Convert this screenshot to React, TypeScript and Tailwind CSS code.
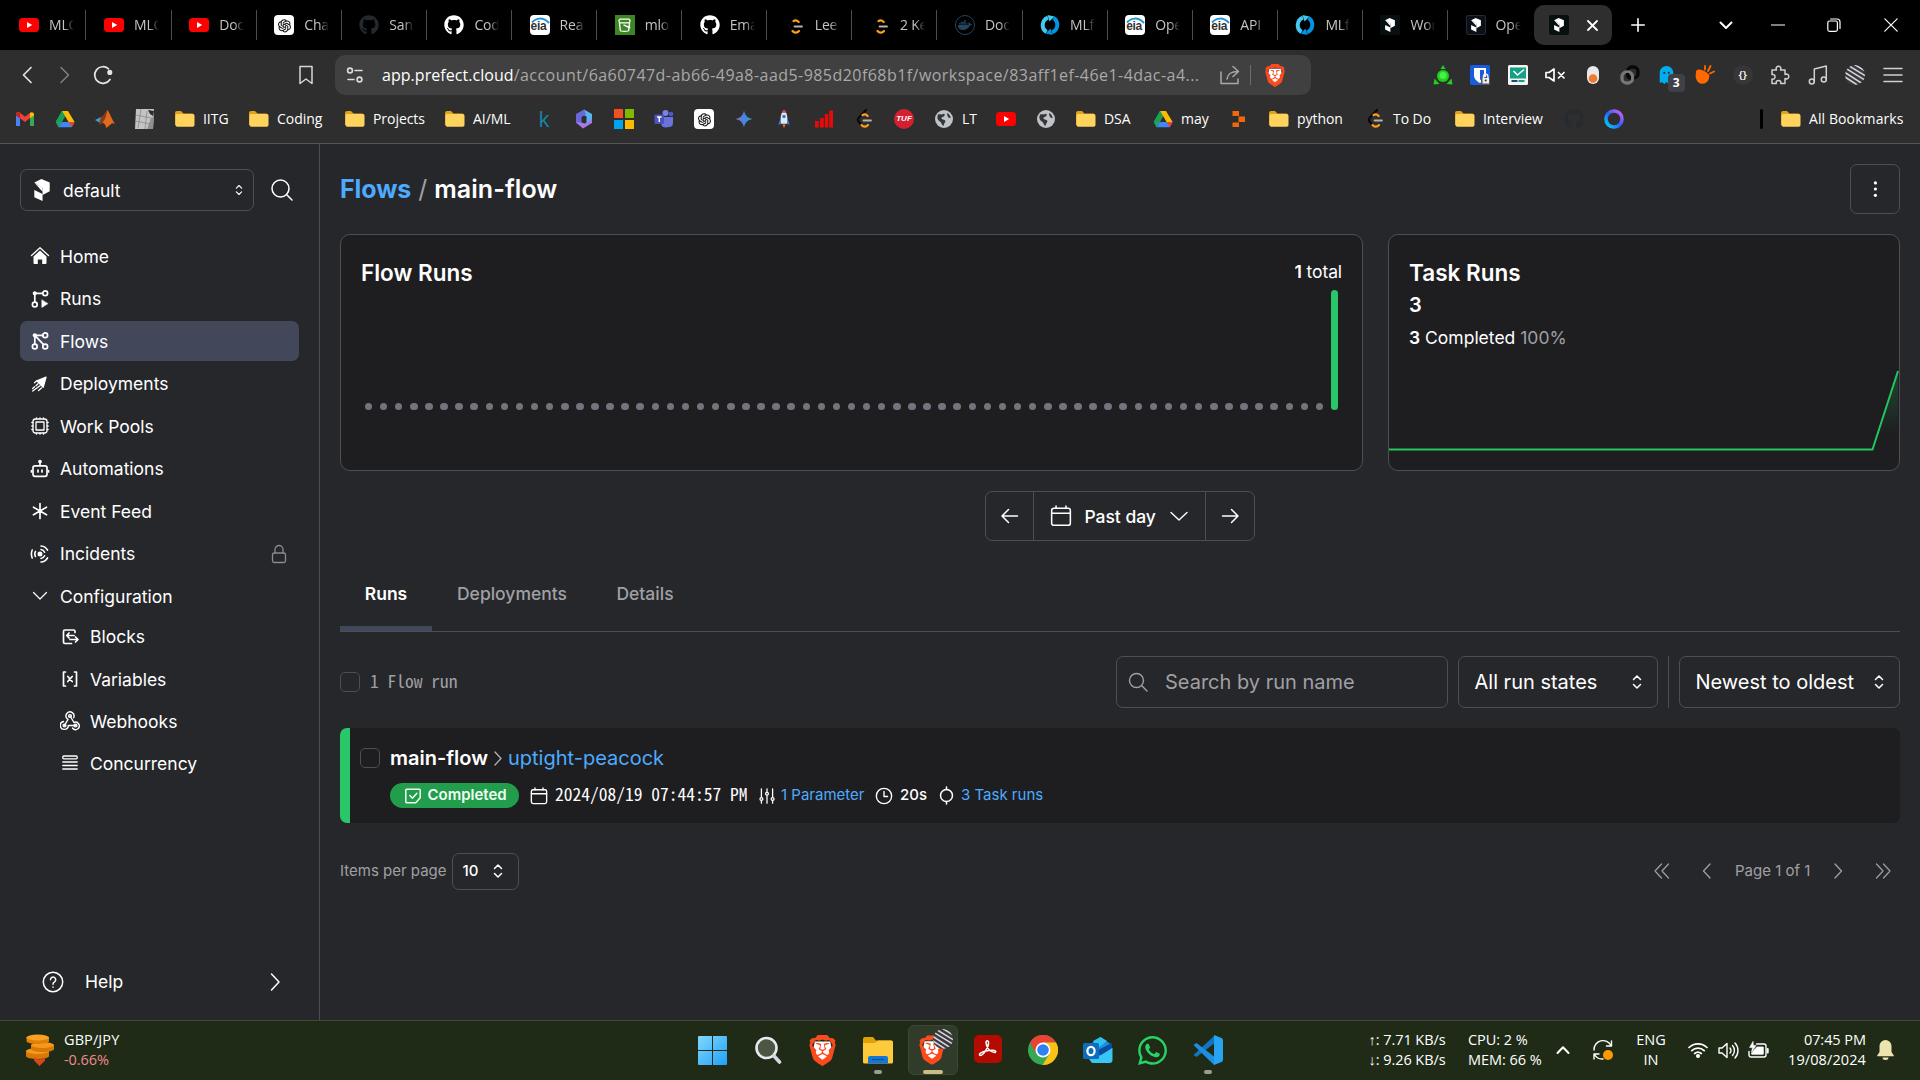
import React from "react";
import type { ReactNode } from "react";
import { FaGithub, FaDocker } from "react-icons/fa";
import { SiBrave } from "react-icons/si";
import { AiOutlineOpenAI } from "react-icons/ai";
import { FaWhatsapp, FaGhost } from "react-icons/fa6";

type SvgProps = { s?: number; w?: number; h?: number; vb?: string; sw?: number; className?: string; children: ReactNode };

function Line({ s = 20, w, h, vb = "0 0 20 20", sw = 1.4, className = "", children }: SvgProps) {
  return (
    <svg
      width={w ?? s}
      height={h ?? s}
      viewBox={vb}
      fill="none"
      stroke="currentColor"
      strokeWidth={sw}
      strokeLinecap="round"
      strokeLinejoin="round"
      className={`shrink-0 ${className}`}
    >
      {children}
    </svg>
  );
}

function Art({ s = 20, w, h, vb = "0 0 20 20", className = "", children }: SvgProps) {
  return (
    <svg width={w ?? s} height={h ?? s} viewBox={vb} className={`shrink-0 ${className}`}>
      {children}
    </svg>
  );
}

/* ---------- brand icons ---------- */

const Youtube = () => (
  <Art>
    <rect x="0" y="3" width="20" height="14" rx="3.5" fill="#f00" />
    <path d="M8 7l5.200 3L8 13z" fill="#fff" />
  </Art>
);
const OpenAI = () => (
  <div className="flex size-5 items-center justify-center rounded-[4px] bg-white">
    <AiOutlineOpenAI size={17} color="#111" />
  </div>
);
const Eia = () => (
  <div className="relative size-5 overflow-hidden rounded-[4px] bg-white">
    <span className="absolute top-[5px] left-[1px] font-['Liberation_Sans'] text-[12px] leading-[13px] font-bold tracking-[-0.3px] text-[#333]">eia</span>
    <Art className="absolute top-0 left-0">
      <path d="M2 7.500C6 3 13 1.500 19 8" fill="none" stroke="#1b95d4" strokeWidth="2" />
    </Art>
  </div>
);
const Bucket = () => (
  <Art>
    <rect width="20" height="20" fill="#3c8623" />
    <rect x="4" y="4.200" width="11" height="3.600" rx="1.500" fill="none" stroke="#fff" strokeWidth="1.300" />
    <path d="M4.500 8l.8 7.500c.2 1.200 8.200 1.200 8.400 0L14.500 8M8.500 9.800l4.500 2" fill="none" stroke="#fff" strokeWidth="1.300" />
    <circle cx="14" cy="12.200" r="1.200" fill="#fff" />
  </Art>
);
const Mlflow = () => (
  <Art>
    <path d="M6.500 17A8 8 0 0 1 8 2.700" fill="none" stroke="#43c9ed" strokeWidth="4" />
    <path d="M13.500 3A8 8 0 0 1 12 17.300" fill="none" stroke="#0194e2" strokeWidth="4" />
    <path d="M7.500 0l7 1.500-5 5z" fill="#43c9ed" />
    <path d="M12.500 20l-7-1.500 5-5z" fill="#0194e2" />
  </Art>
);
const prefectShape = (
  <>
    <path d="M3 4.200L9.500 1 17 4.200v8L10.500 15.500V9.200z" />
    <path d="M3 11l7.500 3.600V21L3 17.500z" />
    <path d="M3 4.200L10.500 9v3.500" />
  </>
);
const PrefectTab = ({ edge = false }: { edge?: boolean }) => (
  <div className={`flex size-5 items-center justify-center rounded-[2px] ${edge ? "border border-[#242833] bg-[#0b0f17]" : "bg-[#070f10]"}`}>
    <Art w={10} h={14} vb="3 1 14 20">
      <g fill="#fff">{prefectShape}</g>
    </Art>
  </div>
);
const Drive = () => (
  <Art>
    <path d="M7 2h6L6.500 13.500 3.500 18.500.7 13z" fill="#1ea362" />
    <path d="M7 2h6l6.600 11h-6z" fill="#fbbc04" />
    <path d="M7 2l3 5.200L6.800 13H.7z" fill="#1e9e50" />
    <path d="M3.600 18.300L6.600 13h13l-3 5.300z" fill="#4285f4" />
    <path d="M13.600 13h6l-2.900 5.200z" fill="#ea4335" />
  </Art>
);
const Gmail = () => (
  <Art>
    <path d="M1 5v12h4V9z" fill="#4285f4" />
    <path d="M19 5v12h-4V9z" fill="#34a853" />
    <path d="M1 5.500C1 3 3.500 2.500 5 3.800l5 3.900 5-3.900v5.300L10 13 1 6.500z" fill="#ea4335" />
    <path d="M15 3.800c1.600-1.300 4-.6 4 1.700V6.400L15 9.300z" fill="#fbbc04" />
    <path d="M1 5.500V6.500l4 3V4C3.500 2.800 1 3.500 1 5.500z" fill="#c5221f" />
  </Art>
);
const Matlab = () => (
  <Art>
    <path d="M0 11l6-3 3 2-4 4z" fill="#3aa5c5" />
    <path d="M6 8c3-1 4-6 6.500-7L9 12l-4 4-1-2z" fill="#8a3a20" />
    <path d="M12.500 1C15 4 17 11 20 15c-2-1-3-1-4.500.5C14 17 12.500 18 11 19c0-3-1.500-5-4-5 3-2 4-8 5.500-13z" fill="#e16a1c" />
  </Art>
);
const Folder = () => (
  <Art>
    <path d="M0 4a2 2 0 0 1 2-2h4l2.500 2.500H17A2 2 0 0 1 19 6.500V16H0z" fill="#e0a11c" />
    <rect x="0.500" y="5" width="19" height="12.800" rx="1.800" fill="#ffd45e" />
  </Art>
);
const Copilot365 = () => (
  <Art>
    <path d="M10 .5l8 4.500v7.500L12.500 15V7.500L7.500 5z" fill="#55b5f0" />
    <path d="M10 .5L2 5v9L7.500 16.500V8l4.500-2.500z" fill="#6a68d8" />
    <path d="M2 13.500L9 19.500l9-5.500v-4L11 14.500l-3.500-1z" fill="#a878e4" />
  </Art>
);
const Microsoft = () => (
  <div className="grid size-5 grid-cols-2 gap-0.5">
    <i className="bg-[#f25022]" />
    <i className="bg-[#7fba00]" />
    <i className="bg-[#00a4ef]" />
    <i className="bg-[#ffb900]" />
  </div>
);
const Teams = () => (
  <Art>
    <circle cx="17" cy="5" r="2.300" fill="#5059c9" />
    <circle cx="11.500" cy="4" r="3" fill="#7b83eb" />
    <path d="M7 8h12v6a4 4 0 0 1-4 4l-3 .5A5 5 0 0 1 7 14z" fill="#6a72dc" />
    <rect x="0.500" y="5.500" width="9.500" height="9.500" rx="1" fill="#4b53bc" />
    <path d="M3 8h4.500M5.250 8v5" stroke="#fff" strokeWidth="1.400" />
  </Art>
);
const Gemini = () => (
  <Art>
    <defs>
      <linearGradient id="gem" x1="0" x2="1">
        <stop offset="0" stopColor="#a36bb5" />
        <stop offset=".5" stopColor="#4585e0" />
        <stop offset="1" stopColor="#2aa2d8" />
      </linearGradient>
    </defs>
    <path d="M10 1.500c1 5 3.500 7.500 8.500 8.500-5 1-7.500 3.500-8.500 8.500-1-5-3.500-7.500-8.500-8.500 5-1 7.500-3.500 8.500-8.500z" fill="url(#gem)" />
  </Art>
);
const Rocket = () => (
  <Art>
    <path d="M6.500 10L4.500 14v2.500l3-2zM13.500 10l2 4v2.500l-3-2z" fill="#2b6fd0" />
    <path d="M10 .8c3 3 4 7.200 3 14H7C6 8 7 3.800 10 .8z" fill="#e5e8ee" />
    <path d="M10 .8c1 1 1.700 2 2.200 3H7.800C8.300 2.800 9 1.800 10 .8z" fill="#d83a3a" />
    <circle cx="10" cy="7.500" r="1.800" fill="#2684d8" />
    <path d="M8.500 15.500h3L10 19z" fill="#f57c28" />
  </Art>
);
const RedBars = () => (
  <Art>
    <path d="M1 12h3.800v6.500H1zM6 9h3.800v9.500H6zM10.800 5h3.500v13.500h-3.500zM15.300 1.500H19v17h-3.700z" fill="#e80a0a" />
  </Art>
);
const Leetcode = () => (
  <Art>
    <path d="M12 1L5 8.500c-1.300 1.300-1.300 3.200 0 4.500l3 3.500" fill="none" stroke="#080808" strokeWidth="2.200" strokeLinecap="round" />
    <path d="M8.500 6.200c1.700-1.300 3.700-.8 5.200.8M7.500 16c2 2.500 4.700 2 6.500 0" fill="none" stroke="#ffa116" strokeWidth="2.200" strokeLinecap="round" />
    <path d="M9.500 11.500h7.500" stroke="#b3b3b3" strokeWidth="1.800" strokeLinecap="round" />
  </Art>
);
const Tuf = () => (
  <div className="flex size-5 items-center justify-center rounded-full bg-[#d41f30] font-['Liberation_Sans'] text-[8px] font-bold tracking-normal text-white italic">TUF</div>
);
const Globe = () => (
  <Art>
    <circle cx="10" cy="10" r="9" fill="#bfc3c7" />
    <path d="M4 5.500c3-.5 4 .5 6-1 1.500 1 .5 3-1.500 3.500C7 8.500 7 10 9 10.500c2 .3 3 1.500 2 3-1 1-1 2-1.500 3.500-1.700-.5-1.500-3-3.500-4.500-2-1.400-3.500-3-2-7zM13 4c2 .8 3.500 3 3.700 5-2 .5-3.700-1.500-3.700-5z" fill="#34373a" />
  </Art>
);
const OrangeBlocks = () => (
  <Art>
    <path d="M3.500 2H10v5H3.500zM9.500 7.500H16v5.500H9.500zM3.500 13.500H10V18H3.500z" fill="#f2670c" />
  </Art>
);
const Ring = () => (
  <Art>
    <defs>
      <linearGradient id="ringg" x1="0" y1="1" x2="1" y2="0">
        <stop offset="0" stopColor="#00d5f5" />
        <stop offset=".5" stopColor="#2a62ff" />
        <stop offset="1" stopColor="#e25cf0" />
      </linearGradient>
    </defs>
    <circle cx="10" cy="10" r="8" fill="none" stroke="url(#ringg)" strokeWidth="3.600" />
  </Art>
);
const Sketch = () => (
  <Art>
    <path d="M1 0h18l-1 20H0z" fill="#c4c4c4" />
    <path d="M1 6l15 3M0 12l16 3M6 0L3 19M12 2L10 20" stroke="#8a8a8a" strokeWidth="0.800" fill="none" />
    <path d="M13 1l6 1-1 5-3-2z" fill="#2e2e2e" />
    <path d="M16 9l3-1-1 12h-6z" fill="#8f8f8f" />
  </Art>
);

/* ---------- browser tab strip ---------- */

const gh = <FaGithub size={20} color="#fff" />;
const ghDark = <FaGithub size={20} color="#24292e" />;

const tabs: { icon: ReactNode; label: string }[] = [
  { icon: <Youtube />, label: "MLO" },
  { icon: <Youtube />, label: "MLO" },
  { icon: <Youtube />, label: "Doc" },
  { icon: <OpenAI />, label: "Cha" },
  { icon: ghDark, label: "San" },
  { icon: gh, label: "Cod" },
  { icon: <Eia />, label: "Rea" },
  { icon: <Bucket />, label: "mlo" },
  { icon: gh, label: "Ema" },
  { icon: <Leetcode />, label: "Lee" },
  { icon: <Leetcode />, label: "2 Ke" },
  {
    icon: (
      <div className="flex size-5 items-center justify-center rounded-full border border-[#24455e]">
        <FaDocker size={14} color="#24455e" />
      </div>
    ),
    label: "Doc",
  },
  { icon: <Mlflow />, label: "MLf" },
  { icon: <Eia />, label: "Ope" },
  { icon: <Eia />, label: "API" },
  { icon: <Mlflow />, label: "MLf" },
  { icon: <PrefectTab />, label: "Wor" },
  { icon: <PrefectTab edge />, label: "Ope" },
];

function TabStrip() {
  return (
    <div className="flex h-[50px] shrink-0 items-center bg-black pl-[1.4px]">
      {tabs.map((t, i) => (
        <div key={i} className={`flex h-[30px] w-[85.1px] shrink-0 items-center gap-2.5 pl-[17.6px] ${i < 17 ? "border-r border-[#4d4d4d]" : ""}`}>
          <div className="flex size-5 shrink-0 items-center justify-center">{t.icon}</div>
          <div className="w-[25px] overflow-hidden mask-r-from-60% pb-px text-[14px] tracking-[-0.2px] whitespace-nowrap text-[#c4c4c4]">{t.label}</div>
        </div>
      ))}
      <div className="ml-[0.8px] flex h-10 w-[78px] items-center rounded-[10px] bg-[#2e2e2e] pl-[15px]">
        <PrefectTab />
        <Line s={11} vb="0 0 11 11" sw={1.8} className="ml-[18px] text-white">
          <path d="M1 1l9 9M10 1l-9 9" />
        </Line>
      </div>
      <Line s={14} vb="0 0 14 14" sw={1.6} className="ml-[19.500px] text-white">
        <path d="M7 .8v12.400M.8 7h12.400" />
      </Line>
      <div className="ml-auto flex h-full items-center text-white">
        <div className="flex w-[54px] justify-center pl-[6px]">
          <Line s={14} vb="0 0 14 14" sw={2}>
            <path d="M1.500 4.500L7 10l5.500-5.500" />
          </Line>
        </div>
        <div className="flex w-[54px] justify-center pl-[2px]">
          <Line s={14} vb="0 0 14 14" sw={1.2}>
            <path d="M.5 7h13" />
          </Line>
        </div>
        <div className="flex w-[58px] justify-center pl-[2px]">
          <Line s={14} vb="0 0 14 14" sw={1.2}>
            <rect x="0.800" y="3" width="9.600" height="10.400" rx="1.800" />
            <path d="M3.600 1h6.400a3 3 0 0 1 3 3v6.500" />
          </Line>
        </div>
        <div className="mr-[1px] flex w-[57px] justify-center pl-px">
          <Line s={14} vb="0 0 14 14" sw={1.2}>
            <path d="M.8.8l12.400 12.400M13.200.8L.8 13.200" />
          </Line>
        </div>
      </div>
    </div>
  );
}

/* ---------- toolbar ---------- */

const stripes = (
  <Art s={22} vb="0 0 22 22">
    <defs>
      <clipPath id="disc">
        <circle cx="11" cy="11" r="10" />
      </clipPath>
    </defs>
    <g clipPath="url(#disc)">
      <rect width="22" height="22" fill="#3a3a40" />
      <path d="M-2 15l14 10M-2 11l20 13M-2 6.500L22 22M-2 2L24 18M2 0l22 13.500M8-1l16 9.500M14-1l10 5" stroke="#d5d5d8" strokeWidth="1.600" />
    </g>
  </Art>
);

const extensions: ReactNode[] = [
  <Art>
    <g fill="#1fd01f">
      <circle cx="10" cy="11" r="6" />
      <path d="M7.500 4L10 0l2.500 4zM.5 19.500l1-6L6.500 19zM19.500 19.500l-1-6L13.500 19z" />
    </g>
    <circle cx="10" cy="10.500" r="3.500" fill="#46f046" />
  </Art>,
  <Art>
    <rect width="20" height="20" rx="2" fill="#175ddc" />
    <path d="M4 3h12v7c0 4-3 6.500-6 8-3-1.500-6-4-6-8z" fill="#fff" />
    <path d="M10 5h4v5c0 2.500-2 4-4 5z" fill="#175ddc" />
    <rect x="11" y="12" width="9" height="8" rx="1.500" fill="#555" />
    <path d="M13.500 13.500v-2a2.200 2.200 0 0 1 4.400 0v2" fill="none" stroke="#eee" strokeWidth="1.400" />
    <rect x="12.500" y="13" width="6.500" height="5.500" fill="#eee" />
    <circle cx="15.700" cy="15.600" r="1" fill="#333" />
  </Art>,
  <Art>
    <rect width="20" height="20" rx="1.500" fill="#f3f5f5" />
    <rect x="2" y="2.500" width="16" height="11" fill="#14a085" />
    <path d="M5.500 6l4 4L16 4.500" fill="none" stroke="#fff" strokeWidth="1.500" />
    <path d="M3.500 16h6" stroke="#244a70" strokeWidth="2" />
    <path d="M10.500 16h6" stroke="#14a085" strokeWidth="2" />
  </Art>,
  <Line className="text-white" sw={1.7}>
    <path d="M1 7.500h3L9 4v12l-5-3.500H1zM13.500 7.500l5.500 5.500M19 7.500L13.500 13" />
  </Line>,
  <Art>
    <rect x="4" y="1" width="12" height="18" rx="6" fill="#e9e9e9" />
    <circle cx="10" cy="13.500" r="4.300" fill="#ee7b30" />
  </Art>,
  <Art>
    <rect x="7.500" y="2" width="10.500" height="11" rx="4.500" fill="none" stroke="#080808" strokeWidth="3.300" />
    <rect x="2" y="7" width="10.500" height="11" rx="4.500" fill="none" stroke="#77777a" strokeWidth="3.300" />
    <path d="M7.500 8v1c0 2.500 1.500 4 3.500 4" fill="none" stroke="#080808" strokeWidth="3.300" />
  </Art>,
  <div className="relative flex size-5 items-center justify-center">
    <FaGhost size={18} color="#00aef0" className="mr-[3px]" />
    <span className="absolute top-[9px] left-[10px] flex h-[18px] w-[17px] items-center justify-center rounded-[4px] bg-[#3f4147] text-[12px] font-bold text-white">3</span>
  </div>,
  <Art>
    <path d="M1.500 6C-.5 11 1 17 5.500 18.500c5 1 8.500-2 8.500-6.500z" fill="#ff6a00" />
    <ellipse cx="7.800" cy="9" rx="7.200" ry="3.400" transform="rotate(28 7.800 9)" fill="#ff6a00" />
    <path d="M10 4.500V1M13 6l2.500-5M15 8.500l4-2" stroke="#ff6a00" strokeWidth="1.800" strokeLinecap="round" />
  </Art>,
  <div className="flex size-5 items-center justify-center rounded-full bg-[#363636] text-[11px] font-semibold text-white">{"{}"}</div>,
  <Line sw={1.5} className="text-[#d0d0d0]">
    <path d="M2 5h4.500c-1-2.200.2-3.800 2-3.800s3 1.600 2 3.800H15v4.500c2.200-1 3.800.2 3.800 2s-1.600 3-3.800 2V18.500h-4.300c.6-2-.6-3-2.200-3s-2.800 1-2.200 3H2V14c2 .6 3-.6 3-2.200s-1-2.800-3-2.200z" />
  </Line>,
  <Line sw={1.5} className="text-[#d0d0d0]">
    <circle cx="3.800" cy="16.500" r="2.500" />
    <circle cx="15.800" cy="14.500" r="2.500" />
    <path d="M6.300 16.500V4L18.300 1v13.500" />
  </Line>,
  stripes,
  <Line sw={1.6} className="text-[#d0d0d0]">
    <path d="M1 3.500h18M1 10h18M1 16.500h18" />
  </Line>,
];

const BraveLogo = ({ w, h }: { w: number; h: number }) => (
  <Art w={w} h={h} vb="1.500 0 21 24">
    <path d="M6 5h12l1 5-3 8-4 3-4-3-3-8z" fill="#fff" />
    <SiBrave x="0" y="0" size={24} color="#fb4a1d" />
  </Art>
);

function Toolbar() {
  return (
    <div className="flex h-[50px] shrink-0 items-center bg-[#2e2e2e]">
      <div className="flex w-[335px] items-center pl-[19px] text-[#e4e4e4]">
        <Line s={18} vb="0 0 18 18" sw={1.7}>
          <path d="M12 1.500L4.500 9l7.500 7.500" />
        </Line>
        <Line s={18} vb="0 0 18 18" sw={1.5} className="ml-[18px] text-[#808080]">
          <path d="M6 1.500L13.500 9 6 16.500" />
        </Line>
        <Line s={20} sw={1.7} className="ml-[20px]">
          <path d="M15.500 3.800A8.300 8.300 0 1 0 17 14.500" />
          <circle cx="16.800" cy="7.400" r="1.700" fill="currentColor" />
        </Line>
        <Line s={20} sw={1.5} className="ml-auto mr-[19px] text-[#d6d6d6]">
          <path d="M4 1.500h12v17L10 14l-6 4.500z" />
        </Line>
      </div>
      <div className="flex h-10 w-[976px] items-center rounded-[10px] bg-[#404040] pl-[11px]">
        <Line s={18} vb="0 0 18 18" sw={1.6} className="text-[#dcdcdc]">
          <circle cx="4" cy="4.500" r="2.400" />
          <path d="M9 4.500h7M2 13.500h6" />
          <circle cx="13.500" cy="13.500" r="2.400" />
        </Line>
        <div className="ml-[18px] w-[830px] text-[16px] tracking-[0.450px] whitespace-nowrap text-[#a9a9a9]">
          <span className="tracking-[0.05px] text-white">app.prefect.cloud</span>
          /account/6a60747d-ab66-49a8-aad5-985d20f68b1f/workspace/83aff1ef-46e1-4dac-a4...
        </div>
        <Line s={20} sw={1.5} className="ml-[8px] text-[#a9a9a9]">
          <path d="M1 7v11.500h17V14M13 1.500l5.500 5-5.500 5M18 6.500c-7 0-10 2-11 7.500" />
        </Line>
        <div className="ml-[10px] h-5 w-px bg-[#6c6c6c]" />
        <div className="ml-[14px]">
          <BraveLogo w={20} h={23} />
        </div>
      </div>
      <div className="ml-auto flex pr-[8.500px]">
        {extensions.map((e, i) => (
          <div key={i} className="flex h-6 w-[37.5px] items-center justify-center">
            {e}
          </div>
        ))}
      </div>
    </div>
  );
}

const bookmarks: { icon: ReactNode; label?: string; w?: string }[] = [
  { icon: <Gmail /> },
  { icon: <Drive /> },
  { icon: <Matlab /> },
  { icon: <Sketch /> },
  { icon: <Folder />, label: "IITG", w: "w-[26px]" },
  { icon: <Folder />, label: "Coding", w: "w-[48px]" },
  { icon: <Folder />, label: "Projects", w: "w-[52px]" },
  { icon: <Folder />, label: "AI/ML", w: "w-[41px]" },
  { icon: <span className="text-[21px] leading-5 font-medium text-[#1686ad]">k</span> },
  { icon: <Copilot365 /> },
  { icon: <Microsoft /> },
  { icon: <Teams /> },
  { icon: <OpenAI /> },
  { icon: <Gemini /> },
  { icon: <Rocket /> },
  { icon: <RedBars /> },
  { icon: <Leetcode /> },
  { icon: <Tuf /> },
  { icon: <Globe />, label: "LT", w: "w-[14px]" },
  { icon: <Youtube /> },
  { icon: <Globe /> },
  { icon: <Folder />, label: "DSA", w: "w-[29px]" },
  { icon: <Drive />, label: "may", w: "w-[28px]" },
  { icon: <OrangeBlocks /> },
  { icon: <Folder />, label: "python", w: "w-[48px]" },
  { icon: <Leetcode />, label: "To Do", w: "w-[42px]" },
  { icon: <Folder />, label: "Interview", w: "w-[61px]" },
  { icon: <FaGithub size={20} color="#262b31" /> },
  { icon: <Ring /> },
];

function Bookmarks() {
  return (
    <div className="flex h-[44px] shrink-0 items-center border-b border-[#565656] bg-[#2e2e2e] pb-[5px] pl-[15px] text-[14px] tracking-[-0.05px] text-white">
      <div className="flex items-center gap-5">
        {bookmarks.map((b, i) => (
          <div key={i} className="flex items-center gap-2">
            <div className="flex size-5 items-center justify-center">{b.icon}</div>
            {b.label && <div className={`pb-0.5 whitespace-nowrap ${b.w}`}>{b.label}</div>}
          </div>
        ))}
      </div>
      <div className="ml-auto h-5 w-[3px] rounded bg-black" />
      <div className="ml-[18px] flex items-center gap-2">
        <Folder />
        <div className="w-[111px] pb-0.5 tracking-[0.1px] whitespace-nowrap">All Bookmarks</div>
      </div>
    </div>
  );
}

/* ---------- sidebar ---------- */

const UpDown = ({ className = "", s = 16 }: { className?: string; s?: number }) => (
  <Line s={s} vb="0 0 16 16" sw={1.5} className={className}>
    <path d="M4.500 5.500L8 2l3.500 3.500M4.500 10.500L8 14l3.500-3.500" />
  </Line>
);

type Item = { label: string; icon: ReactNode; active?: boolean; locked?: boolean };

const nav: Item[] = [
  {
    label: "Home",
    icon: (
      <Line sw={1.3}>
        <path d="M1.500 9.500L10 1.800l8.500 7.700" />
        <path d="M10 4.500l6.500 6v6.500a1 1 0 0 1-1 1h-3.300v-4.500H7.800V18H4.500a1 1 0 0 1-1-1v-6.500z" fill="currentColor" stroke="none" />
      </Line>
    ),
  },
  {
    label: "Runs",
    icon: (
      <Line sw={1.7}>
        <circle cx="15.200" cy="4.300" r="2.400" />
        <circle cx="4.800" cy="15.500" r="2.400" />
        <path d="M12.700 4.300H4.800v8.700" />
        <circle cx="4.800" cy="4.300" r="1.300" fill="currentColor" />
        <path d="M11.800 11v7.500l6-3.700z" fill="currentColor" strokeWidth="0.500" />
      </Line>
    ),
  },
  {
    label: "Flows",
    active: true,
    icon: (
      <Line sw={1.7}>
        <circle cx="15.200" cy="4.300" r="2.400" />
        <circle cx="4.800" cy="15.500" r="2.400" />
        <circle cx="15.200" cy="15.500" r="2.400" />
        <path d="M12.700 4.300H4.800v8.700M4.800 4.300l8.800 9.300" />
        <circle cx="4.800" cy="4.300" r="1.300" fill="currentColor" />
      </Line>
    ),
  },
  {
    label: "Deployments",
    icon: (
      <Line sw={1.3}>
        <path d="M16 3.200L6.800 6.800l6.400 6.400z" fill="currentColor" />
        <path d="M8 9.700L6 11.700M10 11.700L2.700 17M4.500 12.800L2.700 14.500M11.500 14L8.500 16.500" />
        <path d="M6.500 7L4.500 8.800" />
      </Line>
    ),
  },
  {
    label: "Work Pools",
    icon: (
      <Line sw={1.3}>
        <rect x="3" y="3" width="14" height="14" rx="2.500" />
        <rect x="6" y="6" width="8" height="8" />
        <path d="M6.500 1.800v1M10 1.800v1M13.500 1.800v1M6.500 17.200v1M10 17.200v1M13.500 17.200v1M1.800 6.500h1M1.800 10h1M1.800 13.500h1M17.200 6.500h1M17.200 10h1M17.200 13.500h1" />
      </Line>
    ),
  },
  {
    label: "Automations",
    icon: (
      <Line sw={1.7}>
        <rect x="3" y="6.800" width="14" height="10.500" rx="2" />
        <path d="M10 6.500V3.500M8 11v2M12 11v2M1.500 11.500v1.500M18.500 11.500v1.500" />
        <circle cx="10" cy="2.500" r="1" fill="currentColor" />
      </Line>
    ),
  },
  {
    label: "Event Feed",
    icon: (
      <Line sw={1.7}>
        <path d="M10 2.500v15M3.500 6.200l13 7.600M16.500 6.200l-13 7.600" />
      </Line>
    ),
  },
  {
    label: "Incidents",
    locked: true,
    icon: (
      <Line sw={1.6}>
        <circle cx="10" cy="10" r="1.700" fill="currentColor" />
        <path d="M5.500 7.500a5 5 0 0 0 0 5M2.200 6c-1 2.500-1 5.500 0 8M11 5.500a4.600 4.600 0 0 1 3.600 2.700M11 14.500a4.600 4.600 0 0 0 3.600-2.700M11 2a8 8 0 0 1 6.500 4.200M11 18a8 8 0 0 0 6.500-4.200" />
      </Line>
    ),
  },
  {
    label: "Configuration",
    icon: (
      <Line sw={1.2}>
        <path d="M3.500 6.500l6.500 6.500L16.500 6.500" />
      </Line>
    ),
  },
];

const subnav: Item[] = [
  {
    label: "Blocks",
    icon: (
      <Line sw={1.7}>
        <path d="M15 5.500V4.500A1.500 1.500 0 0 0 13.500 3H5a1.500 1.500 0 0 0-1.500 1.500v10.500A1.500 1.500 0 0 0 5 16.500h6.500M7 8.500h7M9 6L6.700 8.500 9 11M10 12.500h7.500M15.500 10L18 12.500l-2.500 2.500" />
      </Line>
    ),
  },
  {
    label: "Variables",
    icon: (
      <Line sw={1.7}>
        <path d="M5.500 3H3.500v14h2M14.500 3h2v14h-2M7.800 7.500l4.400 5M12.200 7.500l-4.400 5" />
      </Line>
    ),
  },
  {
    label: "Webhooks",
    icon: (
      <Line sw={1.4}>
        <circle cx="10" cy="5" r="1.400" />
        <circle cx="4.500" cy="14.500" r="1.400" />
        <circle cx="15.500" cy="14.500" r="1.400" />
        <path d="M7 7.500a4 4 0 1 1 6.600-.8M10 5l4 6.500a3.700 3.700 0 1 1-1.500 5.500M15.500 14.500H8.300a4 4 0 1 1-4.800-4M4.500 14.500L8 8.300" />
      </Line>
    ),
  },
  {
    label: "Concurrency",
    icon: (
      <Line sw={1.3}>
        <rect x="2.800" y="3" width="14.400" height="2.800" rx="1" />
        <path d="M2.800 9h14.400M2.800 12.500h14.400M2.800 16h14.400" />
      </Line>
    ),
  },
];

function NavItem({ item, nested = false }: { item: Item; nested?: boolean }) {
  return (
    <div className={`flex h-10 items-center gap-2.5 rounded-[7px] pr-2.5 ${nested ? "pl-10" : "pl-2.5"} ${item.active ? "bg-[#43475a]" : ""}`}>
      {item.icon}
      <span className="pt-[2px]">{item.label}</span>
      {item.locked && (
        <Line sw={1.3} className="ml-auto text-[#8b8b8f]">
          <rect x="3.500" y="9" width="13" height="9.500" rx="1.800" />
          <path d="M6 9V5.500a4 4 0 0 1 8 0V9" />
        </Line>
      )}
    </div>
  );
}

function Sidebar() {
  return (
    <aside className="flex w-80 shrink-0 flex-col border-r border-[#4b4c52] px-5 pt-[25px] text-[17.5px] text-white">
      <div className="flex items-center">
        <div className="flex h-[42px] w-[234px] items-center rounded-[7px] border border-[#4e4f56] pl-[13px] pr-[8px]">
          <Art w={16} h={22} vb="3 1 14 20">
            <g fill="#fff">{prefectShape}</g>
          </Art>
          <span className="ml-[13px] pt-[2px]">default</span>
          <UpDown s={12} className="ml-auto" />
        </div>
        <Line s={24} vb="0 0 24 24" sw={1.5} className="ml-[16px]">
          <circle cx="10.500" cy="10.500" r="8.500" />
          <path d="M17 17l5 5" />
        </Line>
      </div>
      <nav className="mt-[25px] mr-px flex w-[279px] flex-col gap-[2.5px]">
        {nav.map((n) => (
          <NavItem key={n.label} item={n} />
        ))}
      </nav>
      <div className="mt-[0.5px] flex flex-col gap-[2.3px]">
        {subnav.map((n) => (
          <NavItem key={n.label} item={n} nested />
        ))}
      </div>
      <div className="mt-auto mb-[18px] flex h-10 items-center pl-[21.500px]">
        <Line s={22} vb="0 0 22 22" sw={1.5}>
          <circle cx="11" cy="11" r="9.700" />
          <path d="M8.500 8.700a2.600 2.600 0 1 1 4 2.200c-1 .6-1.500 1.100-1.500 2.300M11 16v.2" />
        </Line>
        <span className="ml-[21.500px] w-[37px]">Help</span>
        <Line sw={1.5} className="ml-[143px]">
          <path d="M6.500 2l7.500 8-7.500 8" />
        </Line>
      </div>
    </aside>
  );
}

/* ---------- main content ---------- */

const Calendar = ({ s, sw }: { s: number; sw: number }) => (
  <Line s={s} sw={sw}>
    <rect x="1.500" y="3" width="17" height="15.500" rx="2" />
    <path d="M1.500 7.500h17M5.500 1v2M14.500 1v2" />
  </Line>
);

const buckets = Array.from({ length: 65 }, (_, i) => (i === 64 ? 1 : 0));

const mono = "font-['Noto_Sans_Mono_CJK_JP','Liberation_Mono',monospace] text-[17.5px] tracking-[0px]";

function Cards() {
  return (
    <div className="mt-5 flex h-[237px] gap-[25px]">
      <section className="flex w-[1023px] flex-col rounded-[10px] border border-[#4e4f56] bg-[#1e1e20] px-5 pt-[22px]">
        <div className="flex h-[31px] items-center justify-between">
          <h2 className="text-[22.5px] font-semibold">Flow Runs</h2>
          <p className="text-[17.5px] tracking-[-0.1px]">
            <b className="font-semibold">1</b> total
          </p>
        </div>
        <div className="mt-[2px] flex h-[120px] items-end">
          {buckets.map((b, i) => (
            <div key={i} className="flex h-full flex-1 items-end justify-center">
              <div className={`w-[7.5px] rounded-full ${b ? "h-[120px] bg-[#2ac769]" : "h-[7.5px] bg-[#73747e]"}`} />
            </div>
          ))}
        </div>
      </section>
      <section className="flex flex-1 flex-col overflow-hidden rounded-[10px] border border-[#4e4f56] bg-[#1e1e20] pt-[22px]">
        <div className="px-5">
          <h2 className="text-[22.5px] leading-[31px] font-semibold">Task Runs</h2>
          <p className="mt-[2px] text-[20px] leading-[30px] font-semibold">3</p>
          <p className="mt-[5px] text-[17.5px] leading-[25px]">
            <b className="font-semibold">3</b> Completed <span className="text-[#a0a0a4]">100%</span>
          </p>
        </div>
        <svg width="510" height="84" viewBox="0 0 510 84" className="mt-[19px] block">
          <defs>
            <linearGradient id="area" x1="0" y1="0" x2="0" y2="1">
              <stop offset="0" stopColor="#22c55e" stopOpacity="0.250" />
              <stop offset="0.800" stopColor="#22c55e" stopOpacity="0" />
            </linearGradient>
          </defs>
          <path d="M483.500 81L509 2v79z" fill="url(#area)" />
          <path d="M0 80.500h483.500L509 2" fill="none" stroke="#22c55e" strokeWidth="2" />
        </svg>
      </section>
    </div>
  );
}

function Select({ label, w }: { label: string; w: string }) {
  return (
    <div className={`flex h-[52px] items-center justify-between rounded-[7px] border border-[#4e4f56] pl-[15.500px] pr-3 text-[20px] ${w}`}>
      <span>{label}</span>
      <UpDown s={16} />
    </div>
  );
}

const Box = () => <div className="size-5 rounded-[5px] border border-[#4e4f56]" />;

function Main() {
  return (
    <main className="flex flex-1 flex-col px-5 pt-5 text-white">
      <div className="flex h-[50px] items-center justify-between">
        <h1 className="pt-[2px] text-[25px] font-bold tracking-[-0.1px] whitespace-pre">
          <span className="text-[#4eaaff]">Flows</span>
          <span className="mx-[7px] font-normal text-[#a0a0a4]">/</span>
          <span className="font-semibold tracking-[0.1px]">main-flow</span>
        </h1>
        <div className="flex size-[50px] items-center justify-center rounded-[7px] border border-[#4e4f56]">
          <Art>
            <g fill="#fff">
              <circle cx="10.400" cy="3.900" r="1.600" />
              <circle cx="10.400" cy="10" r="1.600" />
              <circle cx="10.400" cy="16.300" r="1.600" />
            </g>
          </Art>
        </div>
      </div>

      <Cards />

      <div className="mt-5 flex h-[50px] w-[270px] self-center rounded-[7px] border border-[#4e4f56]">
        <div className="flex w-[48px] items-center justify-center border-r border-[#4e4f56]">
          <Line sw={1.5}>
            <path d="M17.500 10H2M8.500 3.500L2 10l6.500 6.500" />
          </Line>
        </div>
        <div className="flex flex-1 items-center pl-4 text-[17.5px] font-medium">
          <Calendar s={22} sw={1.4} />
          <span className="ml-[12.500px] w-[72px] pt-[2px] tracking-[-0.05px] whitespace-nowrap">Past day</span>
          <Line sw={1.4} className="ml-[12px]">
            <path d="M2 6.500l8 7.500 8-7.500" />
          </Line>
        </div>
        <div className="flex w-[49px] items-center justify-center border-l border-[#4e4f56]">
          <Line sw={1.5}>
            <path d="M2.500 10H18M11.500 3.500L18 10l-6.500 6.500" />
          </Line>
        </div>
      </div>

      <div className="mt-[16px] flex h-[75px] border-b border-[#4e4f56] text-[17.5px] text-[#a0a0a4]">
        <div className="flex w-[92px] items-center justify-center border-b-[5px] border-[#43475a] pt-[6px] font-semibold text-white">Runs</div>
        <div className="flex w-[160px] items-center justify-center pt-px font-medium">Deployments</div>
        <div className="flex w-[106px] items-center justify-center pt-px font-medium">Details</div>
      </div>

      <div className="mt-[24px] flex h-[52px] items-center">
        <Box />
        <span className={`ml-2.5 pb-[2px] text-[#a0a0a4] ${mono}`}>1 Flow run</span>
        <div className="ml-auto flex h-[52px] w-[332px] items-center rounded-[7px] border border-[#4e4f56] pl-[11px] text-[20px] text-[#a0a0a4]">
          <Line sw={1.4}>
            <circle cx="8.500" cy="8.500" r="7" />
            <path d="M13.800 13.800L19 19" />
          </Line>
          <span className="ml-[17px]">Search by run name</span>
        </div>
        <Select label="All run states" w="ml-2.5 w-[200px]" />
        <div className="ml-2.5 h-[52px] w-px bg-[#4e4f56]" />
        <Select label="Newest to oldest" w="ml-2.5 w-[221px]" />
      </div>

      <div className="mt-5 h-[95px] rounded-[7px] border-l-[10px] border-[#2ac769] bg-[#1e1e20] px-2.5 pt-[14px]">
        <div className="flex h-8 items-center text-[20px]">
          <Box />
          <span className="ml-2.5 w-[99px] font-semibold whitespace-nowrap">main-flow</span>
          <Line s={18} vb="0 0 18 18" sw={1.3} className="text-[#b0b0b4]">
            <path d="M6 3l6 6.500L6 16" />
          </Line>
          <span className="ml-[1px] text-[#4eaaff]">uptight-peacock</span>
        </div>
        <div className="mt-[8px] flex h-[27px] items-center pl-[30px] text-[15px] whitespace-nowrap">
          <div className="flex h-[25px] w-[129px] items-center rounded-full bg-[#229d4b] pl-[14px] font-semibold text-[#f0fff4]">
            <Line s={18} sw={1.7}>
              <path d="M3 2.500h14a1 1 0 0 1 1 1V12l-5 5.500H3a1 1 0 0 1-1-1v-13a1 1 0 0 1 1-1zM6.500 9.500l2.800 3 5-5.500" />
            </Line>
            <span className="ml-[5.500px] pb-px">Completed</span>
          </div>
          <div className="ml-[11px]">
            <Calendar s={18} sw={1.5} />
          </div>
          <span className={`ml-[7px] w-[194px] pb-[2px] ${mono}`}>2024/08/19 07:44:57 PM</span>
          <Line s={16} sw={1.6} className="ml-[10px]">
            <path d="M3 1v10.500M3 16v3M10 1v4M10 9.500V19M17 1v10.500M17 16v3" />
            <circle cx="3" cy="13.700" r="1.800" />
            <circle cx="10" cy="7.200" r="1.800" />
            <circle cx="17" cy="13.700" r="1.800" />
          </Line>
          <span className="ml-[6px] w-[84px] pb-px text-[#4eaaff]">1 Parameter</span>
          <Line s={18} sw={1.5} className="ml-[10px]">
            <circle cx="10" cy="10" r="8.500" />
            <path d="M10 5v5.500h4" />
          </Line>
          <span className="ml-[7px] w-[27px] pb-px font-medium">20s</span>
          <Line s={19} sw={1.6} className="ml-[9.500px]">
            <circle cx="10" cy="10" r="6.300" />
            <path d="M10 1v2.700M10 16.300V19" />
          </Line>
          <span className="ml-[5.500px] pb-px text-[#4eaaff]">3 Task runs</span>
        </div>
      </div>

      <div className="mt-[29px] flex h-[38px] items-center whitespace-nowrap text-[#a0a0a4]">
        <span className="w-[112px] text-[15px]">Items per page</span>
        <div className="flex h-[37px] w-[67px] items-center justify-between rounded-[7px] border border-[#4e4f56] pl-[9.500px] pr-[12px] text-[15px] font-medium text-white">
          10
          <UpDown s={16} />
        </div>
        <div className="ml-auto flex items-center text-[15px]">
          <Line s={20} sw={1.2}>
            <path d="M9.500 3L3 10l6.500 7M16.500 3L10 10l6.500 7" />
          </Line>
          <Line s={20} sw={1.3} className="ml-[25px]">
            <path d="M13 3l-6.500 7 6.500 7" />
          </Line>
          <span className="ml-[18px] w-[76px]">Page 1 of 1</span>
          <Line s={20} sw={1.3} className="ml-[17px]">
            <path d="M7 3l6.500 7L7 17" />
          </Line>
          <Line s={20} sw={1.2} className="ml-[24.500px] mr-[7.500px]">
            <path d="M3.500 3l6.500 7-6.500 7M10.500 3l6.500 7-6.500 7" />
          </Line>
        </div>
      </div>
    </main>
  );
}

/* ---------- taskbar ---------- */

const apps: { icon: ReactNode; mark?: "dot" | "bar" }[] = [
  {
    icon: (
      <Art s={29} vb="0 0 29 29" className="mr-px">
        <defs>
          <linearGradient id="win" x1="0" y1="0" x2="1" y2="1" gradientUnits="objectBoundingBox">
            <stop offset="0" stopColor="#83d8fb" />
            <stop offset="1" stopColor="#1fa0f8" />
          </linearGradient>
        </defs>
        <path d="M0 1a1 1 0 0 1 1-1h13v14H0zM15 0h13a1 1 0 0 1 1 1v13H15zM0 15h14v14H1a1 1 0 0 1-1-1zM15 15h14v13a1 1 0 0 1-1 1H15z" fill="url(#win)" />
      </Art>
    ),
  },
  {
    icon: (
      <Art s={28} vb="0 0 28 28">
        <circle cx="12.500" cy="12" r="10" fill="#4b5644" stroke="#e8eaee" strokeWidth="2.600" />
        <path d="M20 20l5.500 6" stroke="#d5d8e0" strokeWidth="3.600" strokeLinecap="round" />
      </Art>
    ),
  },
  { icon: <BraveLogo w={27} h={31} /> },
  {
    mark: "dot",
    icon: (
      <Art w={30} h={27} vb="0 0 30 27">
        <path d="M0 2a2 2 0 0 1 2-2h8l3 3.500h15a2 2 0 0 1 2 2V12H0z" fill="#e2a008" />
        <path d="M0 6h12l3-2.500h13a2 2 0 0 1 2 2V25a1.500 1.500 0 0 1-1.500 1.500h-27A1.500 1.500 0 0 1 0 25z" fill="#fdca3c" />
        <path d="M5 26.500V21a2 2 0 0 1 2-2h16a2 2 0 0 1 2 2v5.500z" fill="#1477d4" />
        <path d="M9 22.500h12" stroke="#0d4f96" strokeWidth="1.200" />
      </Art>
    ),
  },
  {
    mark: "bar",
    icon: (
      <div className="relative mr-[2px]">
        <BraveLogo w={26} h={30} />
        <div className="absolute top-[-7px] left-[13px]">{stripes}</div>
      </div>
    ),
  },
  {
    icon: (
      <Art w={28} h={28} vb="0 0 28 28" className="mb-[3px]">
        <rect width="28" height="28" rx="5" fill="#b30b00" />
        <path
          d="M6.500 20.500c-1.300 0-1.500-1.200 0-2.300 2.500-1.700 8-2.900 12.500-2.900 3.200 0 3.500 2.200 1.500 2.200-4 0-8.500-5-8.500-10 0-2.300 2.600-2.300 2.600.3C14.600 12 9.500 20.500 6.500 20.500z"
          fill="none"
          stroke="#fff"
          strokeWidth="1.500"
        />
      </Art>
    ),
  },
  {
    icon: (
      <Art s={30} vb="0 0 30 30">
        <circle cx="15" cy="15" r="15" fill="#34a853" />
        <path d="M2 7.500A15 15 0 0 1 28 7.500H15L8.500 18.700z" fill="#ea4335" />
        <path d="M28 7.500A15 15 0 0 1 14.500 30L21.500 18.700 15 7.500z" fill="#fbc116" />
        <circle cx="15" cy="15" r="7.500" fill="#fff" />
        <circle cx="15" cy="15" r="5.800" fill="#2f80f0" />
      </Art>
    ),
  },
  {
    icon: (
      <Art w={30} h={28} vb="0 0 30 28">
        <path d="M6 9L17.500 1 29 9v4L17 20 6 14z" fill="#1a8fdc" />
        <path d="M10 5l7.500-4L24 5l-9 7z" fill="#2fc0ef" />
        <path d="M15 14L29 7v5L17 21z" fill="#0a4aa0" />
        <path d="M29.500 12v12a3 3 0 0 1-3 3H9l-3-4 12-4z" fill="#38c6f4" />
        <rect x="0" y="7" width="16" height="16" rx="1.500" fill="#0f6cbd" />
        <ellipse cx="8" cy="15" rx="3.600" ry="4.200" fill="none" stroke="#fff" strokeWidth="2.200" />
      </Art>
    ),
  },
  { icon: <FaWhatsapp size={33} color="#25d366" /> },
  {
    mark: "dot",
    icon: (
      <Art w={30} h={30} vb="0 0 30 30">
        <path d="M.5 20L21 1l2 6L3.500 22z" fill="#1176bd" />
        <path d="M.5 10L3.500 8 23 23l-2 7z" fill="#1c8fe0" />
        <path d="M21 0l7.500 3A2.500 2.500 0 0 1 30 5v20a2.500 2.500 0 0 1-1.500 2L21 30z" fill="#27a3f2" />
      </Art>
    ),
  },
];

function Taskbar() {
  return (
    <footer className="flex h-[60px] shrink-0 items-center border-t border-[#42493a] bg-[#1f2b17] text-[14.5px] leading-[20px] tracking-[-0.05px] whitespace-nowrap text-white">
      <div className="flex w-[685px] items-center pb-[2px] pl-[26px]">
        <Art w={29} h={32} vb="0 0 29 32">
          <g>
            <path d="M0 17v5c0 4 23 4 23 0v-5z" fill="#d87806" />
            <ellipse cx="11.500" cy="17" rx="11.500" ry="3" fill="#f79a1c" />
            <path d="M5 11v4c0 4 23 4 23 0v-4z" fill="#d87806" />
            <ellipse cx="16.500" cy="11" rx="11.500" ry="3" fill="#f79a1c" />
            <path d="M.5 3v4c0 4 22.500 4 22.500 0V3z" fill="#e08008" />
            <ellipse cx="11.700" cy="3.500" rx="11.300" ry="3" fill="#f9a124" />
          </g>
          <path d="M8 23.500l5.500 2 5.500-2v3L13.500 32 8 26.500z" fill="#d8481a" />
        </Art>
        <div className="ml-[9px]">
          <div className="tracking-[0.1px]">GBP/JPY</div>
          <div className="text-[#f08a8f]">-0.66%</div>
        </div>
      </div>
      {apps.map((a, i) => (
        <div key={i} className="flex w-[55px] justify-center pb-px">
          <div
            className={`relative flex size-[50px] items-center justify-center rounded-[6px] ${
              a.mark === "bar" ? "border border-[#3c4735] bg-[#303b29]" : ""
            }`}
          >
            {a.icon}
            {a.mark === "dot" && <i className="absolute bottom-px h-[4px] w-[8px] rounded-full bg-[#9a9f96]" />}
            {a.mark === "bar" && <i className="absolute bottom-0 h-[4px] w-5 rounded-full bg-[#c9bd85]" />}
          </div>
        </div>
      ))}
      <div className="ml-auto flex items-center pb-px">
        <div className="w-[99.500px]">
          <div>↑: 7.71 KB/s</div>
          <div>↓: 9.26 KB/s</div>
        </div>
        <div className="w-[75px]">
          <div>CPU: 2 %</div>
          <div>MEM: 66 %</div>
        </div>
        <div className="flex w-10 justify-center">
          <Line s={14} vb="0 0 14 14" sw={2}>
            <path d="M1.500 10L7 4.300 12.500 10" />
          </Line>
        </div>
        <div className="flex w-10 justify-center">
          <Line s={22} vb="0 0 22 22" sw={1.4}>
            <path d="M2 11A9 9 0 0 1 19 6.500M19.500 2v5h-5M2 20v-5h5M2.500 15.500A9 9 0 0 0 11 20" />
            <circle cx="16" cy="16" r="5" fill="#ff9800" stroke="none" />
          </Line>
        </div>
        <div className="w-14 text-center">
          <div>ENG</div>
          <div>IN</div>
        </div>
        <div className="ml-1 flex w-[30px] justify-center">
          <Line sw={1.7}>
            <path d="M1 7.500a13 13 0 0 1 18 0M3.800 10.700a9 9 0 0 1 12.400 0M6.700 13.500a5 5 0 0 1 6.600 0" />
            <circle cx="10" cy="16" r="1.200" fill="currentColor" />
          </Line>
        </div>
        <div className="flex w-[30px] justify-center">
          <Line s={21} vb="0 0 21 20" sw={1.4}>
            <path d="M1 7.500h3L9 3v14l-5-4.500H1zM12 7.500a4 4 0 0 1 0 5M14.500 5a7.500 7.500 0 0 1 0 10M17 2.500a11 11 0 0 1 0 15" />
          </Line>
        </div>
        <div className="flex w-[30px] justify-center">
          <Line s={21} vb="0 0 21 20" sw={1.4}>
            <path d="M8.500 3.500H16a2 2 0 0 1 2 2v9a2 2 0 0 1-2 2H3a2 2 0 0 1-2-2V11" />
            <path d="M9 6.500h6.300v7.200H3.700V12.500z" fill="currentColor" strokeWidth="0.800" />
            <path d="M5 1L1.500 7h3l-1 4.500L8 5H5.500z" fill="currentColor" strokeWidth="0.500" />
            <path d="M19.700 8.500v3.500" strokeWidth="2" />
          </Line>
        </div>
        <div className="w-[93px] text-right">
          <div>07:45 PM</div>
          <div className="tracking-[0.1px]">19/08/2024</div>
        </div>
        <div className="ml-1 mr-5 flex w-[30px] justify-center">
          <Art w={17} h={20} vb="0 0 17 20">
            <path d="M8.500 0A6 6 0 0 1 14.500 6v6l2.300 3.500v.7H.2v-.7L2.500 12V6A6 6 0 0 1 8.500 0zM5.500 17.500h6a3 2.500 0 0 1-6 0z" fill="#ebe4ae" />
          </Art>
        </div>
      </div>
    </footer>
  );
}

export default function App() {
  return (
    <div className="flex h-[1080px] w-[1920px] flex-col overflow-hidden bg-[#26272b] font-['Open_Sans','Noto_Sans',sans-serif]">
      <TabStrip />
      <Toolbar />
      <Bookmarks />
      <div className="flex min-h-0 flex-1 font-['Inter',sans-serif]">
        <Sidebar />
        <Main />
      </div>
      <Taskbar />
    </div>
  );
}
